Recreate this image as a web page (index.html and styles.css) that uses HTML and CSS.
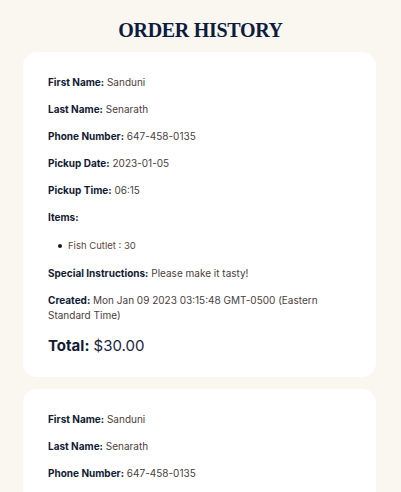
FILE: index.html
```html
<!DOCTYPE html>
<html>
<head>
<meta charset="utf-8">
<link rel="stylesheet" href="styles.css">
</head>
<body>
<h1 class="title">ORDER HISTORY</h1>
<div class="orders">
  <div class="card">
    <p class="row"><span class="label">First Name:</span> <span class="val">Sanduni</span></p>
    <p class="row"><span class="label">Last Name:</span> <span class="val">Senarath</span></p>
    <p class="row"><span class="label">Phone Number:</span> <span class="val">647-458-0135</span></p>
    <p class="row"><span class="label">Pickup Date:</span> <span class="val">2023-01-05</span></p>
    <p class="row"><span class="label">Pickup Time:</span> <span class="val">06:15</span></p>
    <p class="row"><span class="label">Items:</span></p>
    <ul class="items"><li class="item">Fish Cutlet : 30</li></ul>
    <p class="row"><span class="label">Special Instructions:</span> <span class="val">Please make it tasty!</span></p>
    <p class="row"><span class="label">Created:</span> <span class="val">Mon Jan 09 2023 03:15:48 GMT-0500 (Eastern Standard Time)</span></p>
    <p class="total"><span class="label">Total:</span> <span class="val">$30.00</span></p>
  </div>
  <div class="card">
    <p class="row"><span class="label">First Name:</span> <span class="val">Sanduni</span></p>
    <p class="row"><span class="label">Last Name:</span> <span class="val">Senarath</span></p>
    <p class="row"><span class="label">Phone Number:</span> <span class="val">647-458-0135</span></p>
    <p class="row"><span class="label">Pickup Date:</span> <span class="val">2023-01-05</span></p>
    <p class="row"><span class="label">Pickup Time:</span> <span class="val">06:15</span></p>
  </div>
</div>
</body>
</html>
```
FILE: styles.css
```css
html, body {
  margin: 0;
  padding: 0;
  background: #faf7f0;
}
body {
  font-family: "Inter", "Noto Sans", sans-serif;
  overflow: hidden;
  height: 492px;
}
.title {
  margin: 0;
  padding-top: 16px;
  height: 36px;
  text-align: center;
  font-family: "Liberation Serif", "DejaVu Serif", serif;
  font-weight: 700;
  font-size: 20px;
  line-height: 28px;
  color: #0d1b3e;
  letter-spacing: -0.3px;
}
.orders {
  display: flex;
  flex-direction: column;
  gap: 12px;
  padding: 0 25px 0 23px;
}
.card {
  background: #ffffff;
  border-radius: 14px;
  padding: 23px 25px 20px;
  display: flex;
  flex-direction: column;
  gap: 12px;
}
.row {
  margin: 0;
  font-size: 10px;
  line-height: 15px;
}
.label {
  font-weight: 700;
  color: #111a33;
}
.val {
  color: #4a4040;
}
.items {
  margin: 1px 0 1px;
  padding-left: 20px;
  list-style: none;
  font-size: 9.5px;
  line-height: 15px;
  color: #5a4440;
}
.item {
  display: flex;
  align-items: center;
  gap: 6px;
}
.item::before {
  content: "";
  width: 4px;
  height: 4px;
  margin-left: -10px;
  border-radius: 50%;
  background: #1a1a22;
}
.total {
  margin: 0;
  font-size: 15px;
  line-height: 22px;
}
.total .val {
  color: #1a2440;
  font-weight: 400;
}
```
